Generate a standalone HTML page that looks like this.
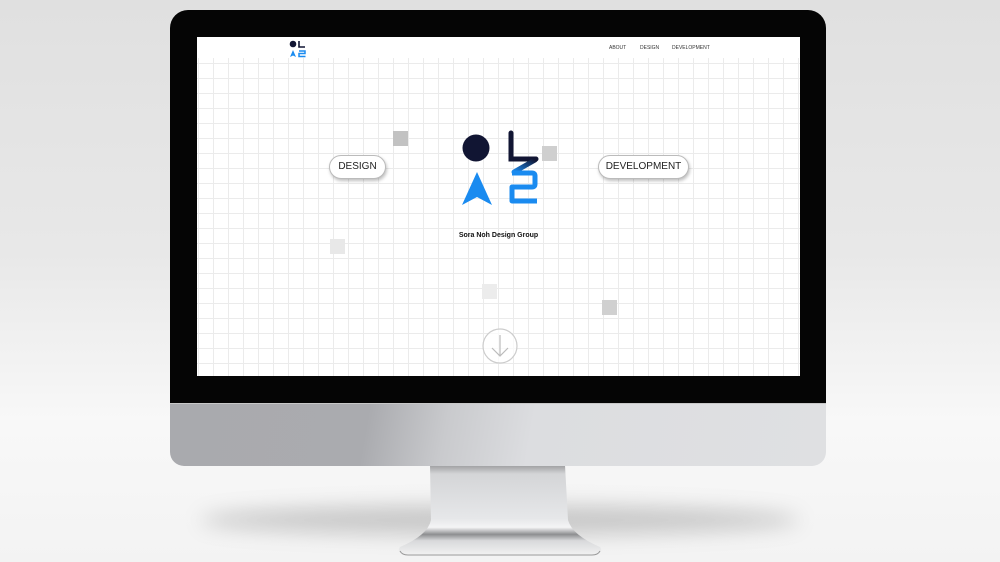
<!DOCTYPE html>
<html><head><meta charset="utf-8"><style>
*{margin:0;padding:0;box-sizing:border-box}
body{width:1000px;height:562px;overflow:hidden;position:relative;font-family:"Liberation Sans",sans-serif;
background:linear-gradient(#e0e0e0 0%,#e8e8e8 45%,#f8f8f8 75%,#f3f3f3 100%)}
.abs{position:absolute}
#bezel{left:170px;top:10px;width:656px;height:400px;background:#050505;border-radius:18px 18px 0 0}
#chin{left:170px;top:403px;width:656px;height:63px;border-radius:0 0 14px 14px;
background:linear-gradient(100deg,#a9aaae 0%,#aaabaf 30%,#c9cacd 42%,#dcdde0 55%,#dfe0e2 100%);border-top:1px solid #c8c8c8}
#screen{left:197px;top:37px;width:603px;height:339px;background-color:#fff;overflow:hidden}
#grid{left:0;top:21px;width:603px;height:318px;background-color:#fff;
background-image:linear-gradient(90deg,#ebebeb 1px,transparent 1px),linear-gradient(#ebebeb 1px,transparent 1px);
background-size:15px 15px;background-position:1px 5px}
.sq{position:absolute;width:15px;height:15px}
.pill{position:absolute;height:24px;border-radius:12px;background:#fff;border:1px solid #bbb;
box-shadow:1px 2px 3px rgba(0,0,0,.25);font-size:10px;color:#222;text-align:center;line-height:22px}
.nav{position:absolute;top:8px;font-size:5px;color:#333}
#shadow{left:200px;top:505px;width:600px;height:30px;border-radius:50%;background:rgba(0,0,0,.18);filter:blur(10px)}
</style></head><body>
<div id="shadow" class="abs"></div>
<svg class="abs" style="left:390px;top:465px" width="220" height="97" viewBox="0 0 220 97">
<defs><linearGradient id="st" x1="0" y1="0" x2="0" y2="1">
<stop offset="0" stop-color="#9c9c9e"/><stop offset=".1" stop-color="#d4d5d7"/><stop offset=".6" stop-color="#e6e7e9"/><stop offset=".7" stop-color="#f4f4f5"/><stop offset=".78" stop-color="#8d8e90"/><stop offset=".85" stop-color="#d8d9db"/><stop offset="1" stop-color="#f0f0f0"/></linearGradient></defs>
<path d="M40 0 L175 0 L178 55 Q182 70 210 82 Q214 88 205 89 L15 89 Q6 88 10 82 Q38 70 41 55 Z" fill="url(#st)"/>
<path d="M10 86 Q12 90 18 90 L202 90 Q208 90 210 86" stroke="#999" fill="none"/>
</svg>
<div id="bezel" class="abs"></div>
<div id="chin" class="abs"></div>
<div id="screen" class="abs">
 <div id="grid" class="abs"></div>
 <svg class="abs" style="left:92px;top:3px" width="20" height="18" viewBox="0 0 20 18">
  <circle cx="4" cy="4" r="3.3" fill="#111533"/>
  <path d="M10 1 V7 H16" stroke="#111533" stroke-width="1.6" fill="none"/>
  <path d="M1 17 L4 10 L7 17 L4 15.5 Z" fill="#1a8bf0"/>
  <path d="M10 11 H16 V13.5 H10 V16.5 H16.5" stroke="#1a8bf0" stroke-width="1.5" fill="none"/>
 </svg>
 <div class="nav" style="left:412px">ABOUT</div>
 <div class="nav" style="left:443px">DESIGN</div>
 <div class="nav" style="left:475px">DEVELOPMENT</div>
 <div class="sq" style="left:196px;top:94px;background:#c2c2c2"></div>
 <div class="sq" style="left:345px;top:109px;background:#cfcfcf"></div>
 <div class="sq" style="left:133px;top:202px;background:#e8e8e8"></div>
 <div class="sq" style="left:285px;top:247px;background:#ececec"></div>
 <div class="sq" style="left:405px;top:263px;background:#d0d0d0"></div>
 <div class="pill" style="left:132px;top:118px;width:57px">DESIGN</div>
 <div class="pill" style="left:401px;top:118px;width:91px">DEVELOPMENT</div>
 <svg class="abs" style="left:263px;top:92px" width="80" height="80" viewBox="0 0 80 80">
  <defs><linearGradient id="dg" x1="1" y1="0" x2="0" y2="1"><stop offset="0" stop-color="#111533"/><stop offset="1" stop-color="#1a8bf0"/></linearGradient></defs>
  <circle cx="16" cy="19" r="13.5" fill="#111533"/>
  <path d="M51 4 V30 H76" stroke="#111533" stroke-width="5" fill="none" stroke-linecap="round"/>
  <path d="M75 31 L54 43" stroke="url(#dg)" stroke-width="5" stroke-linecap="round"/>
  <path d="M2 76 L17 43 L32 76 L17 68 Z" fill="#1a8bf0"/>
  <path d="M52 44 H72 Q75 44 75 47 V55 Q75 58 72 58 H52 V72 H77" stroke="#1a8bf0" stroke-width="5" fill="none" stroke-linejoin="round"/>
 </svg>
 <div class="abs" style="left:0;width:603px;top:195px;text-align:center;font-size:7px;font-weight:bold;color:#111">Sora Noh Design Group</div>
 <svg class="abs" style="left:284px;top:290px" width="38" height="38" viewBox="0 0 38 38">
  <circle cx="19" cy="19" r="17" fill="rgba(255,255,255,.7)" stroke="#ccc" stroke-width="1.2"/>
  <path d="M19 8 V29 M11 21 L19 29 L27 21" stroke="#bbb" stroke-width="1.2" fill="none"/>
 </svg>
</div>
</body></html>
